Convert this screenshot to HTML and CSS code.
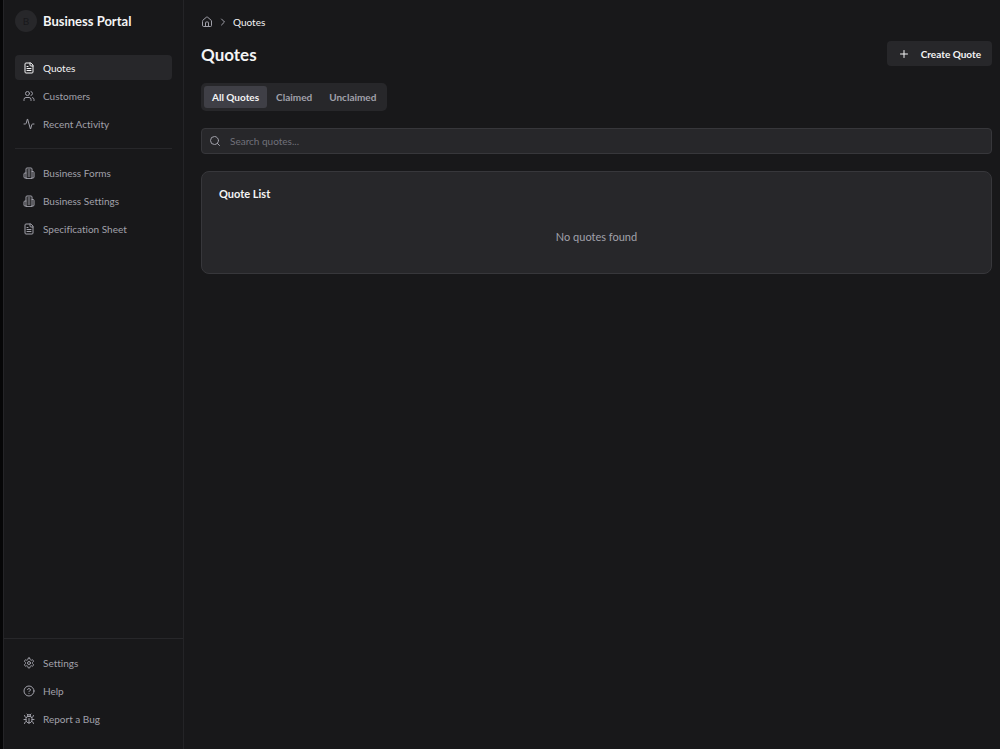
FILE: index.html
```html
<!DOCTYPE html>
<html lang="en">
<head>
<meta charset="UTF-8">
<meta name="viewport" content="width=device-width, initial-scale=1.0">
<title>Quotes - Business Portal</title>
<link rel="stylesheet" href="styles.css">
</head>
<body>

<!-- shared icon shapes -->
<svg class="sprite" aria-hidden="true">
    <symbol id="file" viewBox="0 0 24 24"><path d="M15 2H6a2 2 0 0 0-2 2v16a2 2 0 0 0 2 2h12a2 2 0 0 0 2-2V7Z"/><path d="M14 2v4a2 2 0 0 0 2 2h4M10 9H8M16 13H8M16 17H8"/></symbol>
    <symbol id="building" viewBox="0 0 24 24"><path d="M6 22V4a2 2 0 0 1 2-2h8a2 2 0 0 1 2 2v18Z"/><path d="M6 12H4a2 2 0 0 0-2 2v6a2 2 0 0 0 2 2h2M18 9h2a2 2 0 0 1 2 2v9a2 2 0 0 1-2 2h-2M10 6h4M10 10h4M10 14h4M10 18h4"/></symbol>
</svg>

<aside class="sidebar">
    <div class="brand">
        <span class="avatar">B</span>
        <span class="brandName">Business Portal</span>
    </div>

    <nav class="nav">
        <a href="#" class="navItem active"><svg class="icon"><use href="#file"/></svg>Quotes</a>
        <a href="#" class="navItem"><svg class="icon" viewBox="0 0 24 24"><path d="M16 21v-2a4 4 0 0 0-4-4H6a4 4 0 0 0-4 4v2"/><circle cx="9" cy="7" r="4"/><path d="M22 21v-2a4 4 0 0 0-3-3.87M16 3.13a4 4 0 0 1 0 7.75"/></svg>Customers</a>
        <a href="#" class="navItem"><svg class="icon" viewBox="0 0 24 24"><path d="M22 12h-2.48a2 2 0 0 0-1.93 1.46l-2.35 8.36a.25.25 0 0 1-.48 0L9.24 2.18a.25.25 0 0 0-.48 0l-2.35 8.36A2 2 0 0 1 4.49 12H2"/></svg>Recent Activity</a>
        <hr class="divider">
        <a href="#" class="navItem"><svg class="icon"><use href="#building"/></svg>Business Forms</a>
        <a href="#" class="navItem"><svg class="icon"><use href="#building"/></svg>Business Settings</a>
        <a href="#" class="navItem"><svg class="icon"><use href="#file"/></svg>Specification Sheet</a>
    </nav>

    <nav class="nav footerNav">
        <a href="#" class="navItem"><svg class="icon" viewBox="0 0 24 24"><path d="M12.22 2h-.44a2 2 0 0 0-2 2v.18a2 2 0 0 1-1 1.73l-.43.25a2 2 0 0 1-2 0l-.15-.08a2 2 0 0 0-2.73.73l-.22.38a2 2 0 0 0 .73 2.73l.15.1a2 2 0 0 1 1 1.72v.51a2 2 0 0 1-1 1.74l-.15.09a2 2 0 0 0-.73 2.73l.22.38a2 2 0 0 0 2.73.73l.15-.08a2 2 0 0 1 2 0l.43.25a2 2 0 0 1 1 1.73V20a2 2 0 0 0 2 2h.44a2 2 0 0 0 2-2v-.18a2 2 0 0 1 1-1.73l.43-.25a2 2 0 0 1 2 0l.15.08a2 2 0 0 0 2.73-.73l.22-.39a2 2 0 0 0-.73-2.73l-.15-.08a2 2 0 0 1-1-1.74v-.5a2 2 0 0 1 1-1.74l.15-.09a2 2 0 0 0 .73-2.73l-.22-.38a2 2 0 0 0-2.73-.73l-.15.08a2 2 0 0 1-2 0l-.43-.25a2 2 0 0 1-1-1.73V4a2 2 0 0 0-2-2z"/><circle cx="12" cy="12" r="3"/></svg>Settings</a>
        <a href="#" class="navItem"><svg class="icon" viewBox="0 0 24 24"><circle cx="12" cy="12" r="10"/><path d="M9.09 9a3 3 0 0 1 5.83 1c0 2-3 3-3 3M12 17h.01"/></svg>Help</a>
        <a href="#" class="navItem"><svg class="icon" viewBox="0 0 24 24"><path d="m8 2 1.88 1.88M14.12 3.88 16 2M9 7.13v-1a3 3 0 1 1 6 0v1"/><path d="M12 20c-3.3 0-6-2.7-6-6v-3a4 4 0 0 1 4-4h4a4 4 0 0 1 4 4v3c0 3.3-2.7 6-6 6M12 20v-9"/><path d="M6.53 9C4.6 8.8 3 7.1 3 5M6 13H2M3 21c0-2.1 1.7-3.9 3.8-4M20.97 5c0 2.1-1.6 3.8-3.5 4M22 13h-4M17.2 17c2.1.1 3.8 1.9 3.8 4"/></svg>Report a Bug</a>
    </nav>
</aside>

<main class="content">
    <nav class="breadcrumb" aria-label="Breadcrumb">
        <a href="#" class="home" aria-label="Home"><svg class="icon" viewBox="0 0 24 24"><path d="M15 21v-8a1 1 0 0 0-1-1h-4a1 1 0 0 0-1 1v8"/><path d="M3 10a2 2 0 0 1 .709-1.528l7-5.999a2 2 0 0 1 2.582 0l7 5.999A2 2 0 0 1 21 10v9a2 2 0 0 1-2 2H5a2 2 0 0 1-2-2z"/></svg></a>
        <svg class="icon chevron" viewBox="0 0 24 24"><path d="m9 18 6-6-6-6"/></svg>
        <span>Quotes</span>
    </nav>

    <header class="titleRow">
        <h1>Quotes</h1>
        <button type="button" class="createButton"><svg class="icon" viewBox="0 0 24 24"><path d="M5 12h14M12 5v14"/></svg>Create Quote</button>
    </header>

    <div class="tabs" role="tablist">
        <button type="button" class="tab selected" role="tab" aria-selected="true">All Quotes</button>
        <button type="button" class="tab" role="tab" aria-selected="false">Claimed</button>
        <button type="button" class="tab" role="tab" aria-selected="false">Unclaimed</button>
    </div>

    <label class="search">
        <svg class="icon" viewBox="0 0 24 24"><circle cx="11" cy="11" r="8"/><path d="m21 21-4.3-4.3"/></svg>
        <input type="text" placeholder="Search quotes..." aria-label="Search quotes">
    </label>

    <section class="card">
        <h2>Quote List</h2>
        <p class="empty">No quotes found</p>
    </section>
</main>

</body>
</html>
```
FILE: styles.css
```css
* {
    box-sizing: border-box;
}

body {
    margin: 0;
    min-height: 100vh;
    display: flex;
    border-left: 3px solid #060607;
    background-color: #18181a;
    color: #f4f4f5;
    font-family: Lato, "Open Sans", sans-serif;
    font-size: 10px;
    line-height: 14px;
    font-variant-ligatures: none;
}

a {
    color: inherit;
    text-decoration: none;
}

button,
input {
    font: inherit;
    color: inherit;
}

.sprite {
    display: none;
}

.icon {
    width: 12px;
    height: 12px;
    flex-shrink: 0;
    fill: none;
    stroke: currentColor;
    stroke-width: 2;
    stroke-linecap: round;
    stroke-linejoin: round;
}

.sidebar {
    width: 181px;
    flex-shrink: 0;
    display: flex;
    flex-direction: column;
    border-left: 1px solid #242427;
    border-right: 1px solid #242427;
}

.brand {
    display: flex;
    align-items: center;
    gap: 6px;
    padding: 10px 11px 23px;
}

.avatar {
    width: 22px;
    height: 22px;
    display: flex;
    align-items: center;
    justify-content: center;
    border-radius: 50%;
    background-color: #27272a;
    color: #18181b;
}

.brandName {
    font-size: 13px;
    font-weight: 700;
}

.nav {
    display: flex;
    flex-direction: column;
    gap: 3px;
    padding: 0 11px;
}

.navItem {
    height: 25px;
    display: flex;
    align-items: center;
    gap: 8px;
    padding: 0 8px;
    border-radius: 4px;
    color: #a1a1aa;
}

.navItem.active {
    background-color: #27272a;
    color: #f4f4f5;
}

.divider {
    width: 100%;
    margin: 9px 0 8px;
    border: 0;
    border-top: 1px solid #27272a;
}

.footerNav {
    margin-top: auto;
    padding-top: 11px;
    padding-bottom: 18px;
    border-top: 1px solid #27272a;
}

.content {
    flex: 1;
    min-width: 0;
    padding: 15px 8px 16px 17px;
}

.breadcrumb {
    display: flex;
    align-items: center;
    gap: 4px;
    margin-bottom: 12px;
}

.home {
    display: flex;
    color: #a1a1aa;
}

.chevron {
    color: #a1a1aa;
}

.titleRow {
    display: flex;
    align-items: flex-start;
    justify-content: space-between;
    margin-bottom: 14px;
}

h1 {
    margin: 0;
    font-size: 17px;
    font-weight: 700;
    line-height: 28px;
}

.createButton {
    height: 25px;
    display: flex;
    align-items: center;
    gap: 11px;
    padding: 0 11px;
    border: 0;
    border-radius: 4px;
    background-color: #27272a;
    font-weight: 700;
}

.tabs {
    width: fit-content;
    display: flex;
    gap: 1px;
    margin-bottom: 17px;
    padding: 3px;
    border-radius: 5px;
    background-color: #27272a;
}

.tab {
    height: 22px;
    padding: 0 8px;
    border: 0;
    border-radius: 3px;
    background: none;
    color: #a1a1aa;
    font-weight: 700;
}

.tab.selected {
    background-color: #3f3f46;
    color: #f4f4f5;
}

.search {
    height: 26px;
    display: flex;
    align-items: center;
    gap: 9px;
    margin-bottom: 17px;
    padding: 0 7px;
    border: 1px solid #37373b;
    border-radius: 4px;
    background-color: #27272a;
    color: #a1a1aa;
}

.search input {
    flex: 1;
    min-width: 0;
    padding: 0;
    border: 0;
    outline: 0;
    background: none;
}

.search input::placeholder {
    color: #71717a;
}

.card {
    padding: 15px 17px 28px;
    border: 1px solid #37373b;
    border-radius: 8px;
    background-color: #27272a;
}

h2 {
    margin: 0 0 28px;
    font-size: 11px;
    font-weight: 700;
    line-height: 14px;
}

.empty {
    margin: 0;
    color: #a1a1aa;
    font-size: 11px;
    line-height: 16px;
    text-align: center;
}
```
